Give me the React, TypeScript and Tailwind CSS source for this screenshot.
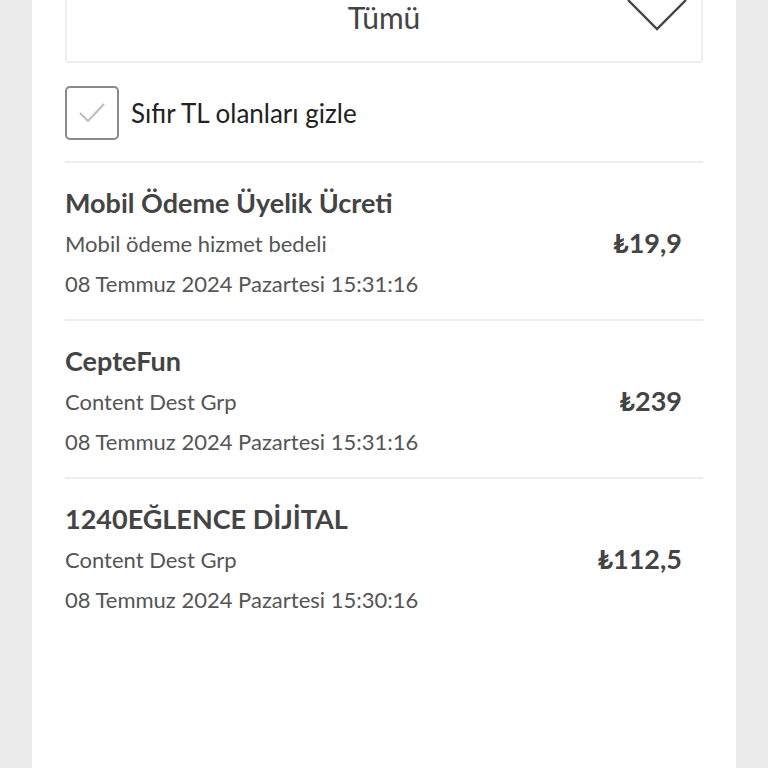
import React from 'react';

const items = [
  {
    title: 'Mobil Ödeme Üyelik Ücreti',
    sub: 'Mobil ödeme hizmet bedeli',
    date: '08 Temmuz 2024 Pazartesi 15:31:16',
    amount: '₺19,9',
  },
  {
    title: 'CepteFun',
    sub: 'Content Dest Grp',
    date: '08 Temmuz 2024 Pazartesi 15:31:16',
    amount: '₺239',
  },
  {
    title: '1240EĞLENCE DİJİTAL',
    sub: 'Content Dest Grp',
    date: '08 Temmuz 2024 Pazartesi 15:30:16',
    amount: '₺112,5',
  },
];

const App = () => {
  return (
    <div className="min-h-[768px] bg-[#ebebeb] px-[32px] font-['Lato',sans-serif] text-[#333]">
      <div className="min-h-[768px] bg-white px-[33px]">
        {/* Dropdown */}
        <div className="relative flex h-[63px] items-start justify-center rounded-b-[3px] border-x-2 border-b-2 border-[#eeeeee]">
          <span className="pt-[1px] text-[30px] leading-[32px] text-[#444]">Tümü</span>
          <svg className="absolute right-[13px] top-0" width="62" height="32" viewBox="0 0 62 32" fill="none">
            <path d="M2 0 L31 29 L60 0" stroke="#444" strokeWidth="2.4" />
          </svg>
        </div>

        {/* Checkbox */}
        <div className="mt-[23px] flex items-center gap-[12px]">
          <div className="flex h-[54px] w-[54px] items-center justify-center rounded-[5px] border-2 border-[#8a8a8a]">
            <svg width="28" height="22" viewBox="0 0 28 22" fill="none">
              <path d="M2 11 L10 19 L26 2" stroke="#bdbdbd" strokeWidth="2" />
            </svg>
          </div>
          <span className="text-[26px] text-[#222]">Sıfır TL olanları gizle</span>
        </div>

        {/* List */}
        <div className="mt-[21px]">
          {items.map((item, i) => (
            <div key={i} className="flex items-center border-t-2 border-[#eeeeee] pb-[19px] pt-[23px]">
              <div className="flex-1">
                <div className="text-[27px] font-bold leading-[34px] text-[#444]">{item.title}</div>
                <div className="mt-[8px] text-[22px] leading-[32px] text-[#555]">{item.sub}</div>
                <div className="mt-[8px] text-[22px] leading-[32px] text-[#555]">{item.date}</div>
              </div>
              <div className="mr-[21px] text-[27px] font-bold text-[#444]">{item.amount}</div>
            </div>
          ))}
        </div>
      </div>
    </div>
  );
};

export default App;
